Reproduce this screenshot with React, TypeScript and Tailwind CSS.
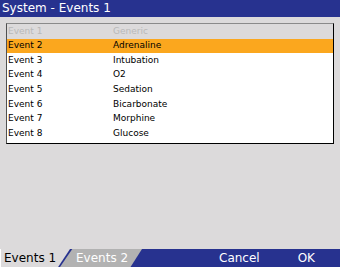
export default function App() {
  const rows = [
    ["Event 2", "Adrenaline"],
    ["Event 3", "Intubation"],
    ["Event 4", "O2"],
    ["Event 5", "Sedation"],
    ["Event 6", "Bicarbonate"],
    ["Event 7", "Morphine"],
    ["Event 8", "Glucose"],
  ]

  return (
    <div className="w-[340px] h-[267px] flex flex-col bg-[#dcdadb] overflow-hidden font-['DejaVu_Sans',sans-serif]">
      <div className="h-[17px] bg-[#27328f] text-white text-[12px] leading-[17px] pl-[2px]">System - Events 1</div>

      <div className="flex-1 pt-[6px] pl-[6px] pr-[6px]">
        <div className="border-t border-t-[#8a8a8a] border-l border-l-[#505050] border-r border-r-black border-b border-b-black bg-white pb-[2px] text-[9px]">
          <div className="h-[14.6px] flex items-center bg-[#dcdadb] text-[#b9b9b9]">
            <span className="w-[106px] pl-[1px]">Event 1</span>
            <span>Generic</span>
          </div>
          {rows.map(([a, b], i) => (
            <div
              key={a}
              className={
                i === 0
                  ? "h-[14.6px] flex items-center bg-[#fba71e] text-black"
                  : "h-[14.6px] flex items-center text-black"
              }
            >
              <span className="w-[106px] pl-[1px]">{a}</span>
              <span>{b}</span>
            </div>
          ))}
        </div>
      </div>

      <div className="h-[18px] bg-[#27328f] flex items-stretch text-[12px] leading-[18px]">
        <div className="w-[70px] bg-[#dcdadb] border-l border-l-white text-black pl-[3px] [clip-path:polygon(0_0,100%_0,83%_100%,0_100%)]">
          Events 1
        </div>
        <div className="-ml-[10px] w-[82px] bg-[#b2b2b2] text-white pl-[16px] [clip-path:polygon(15%_0,100%_0,86%_100%,0_100%)]">
          Events 2
        </div>
        <div className="flex-1" />
        <span className="text-white mr-[38px]">Cancel</span>
        <span className="text-white mr-[25px]">OK</span>
      </div>
    </div>
  )
}
